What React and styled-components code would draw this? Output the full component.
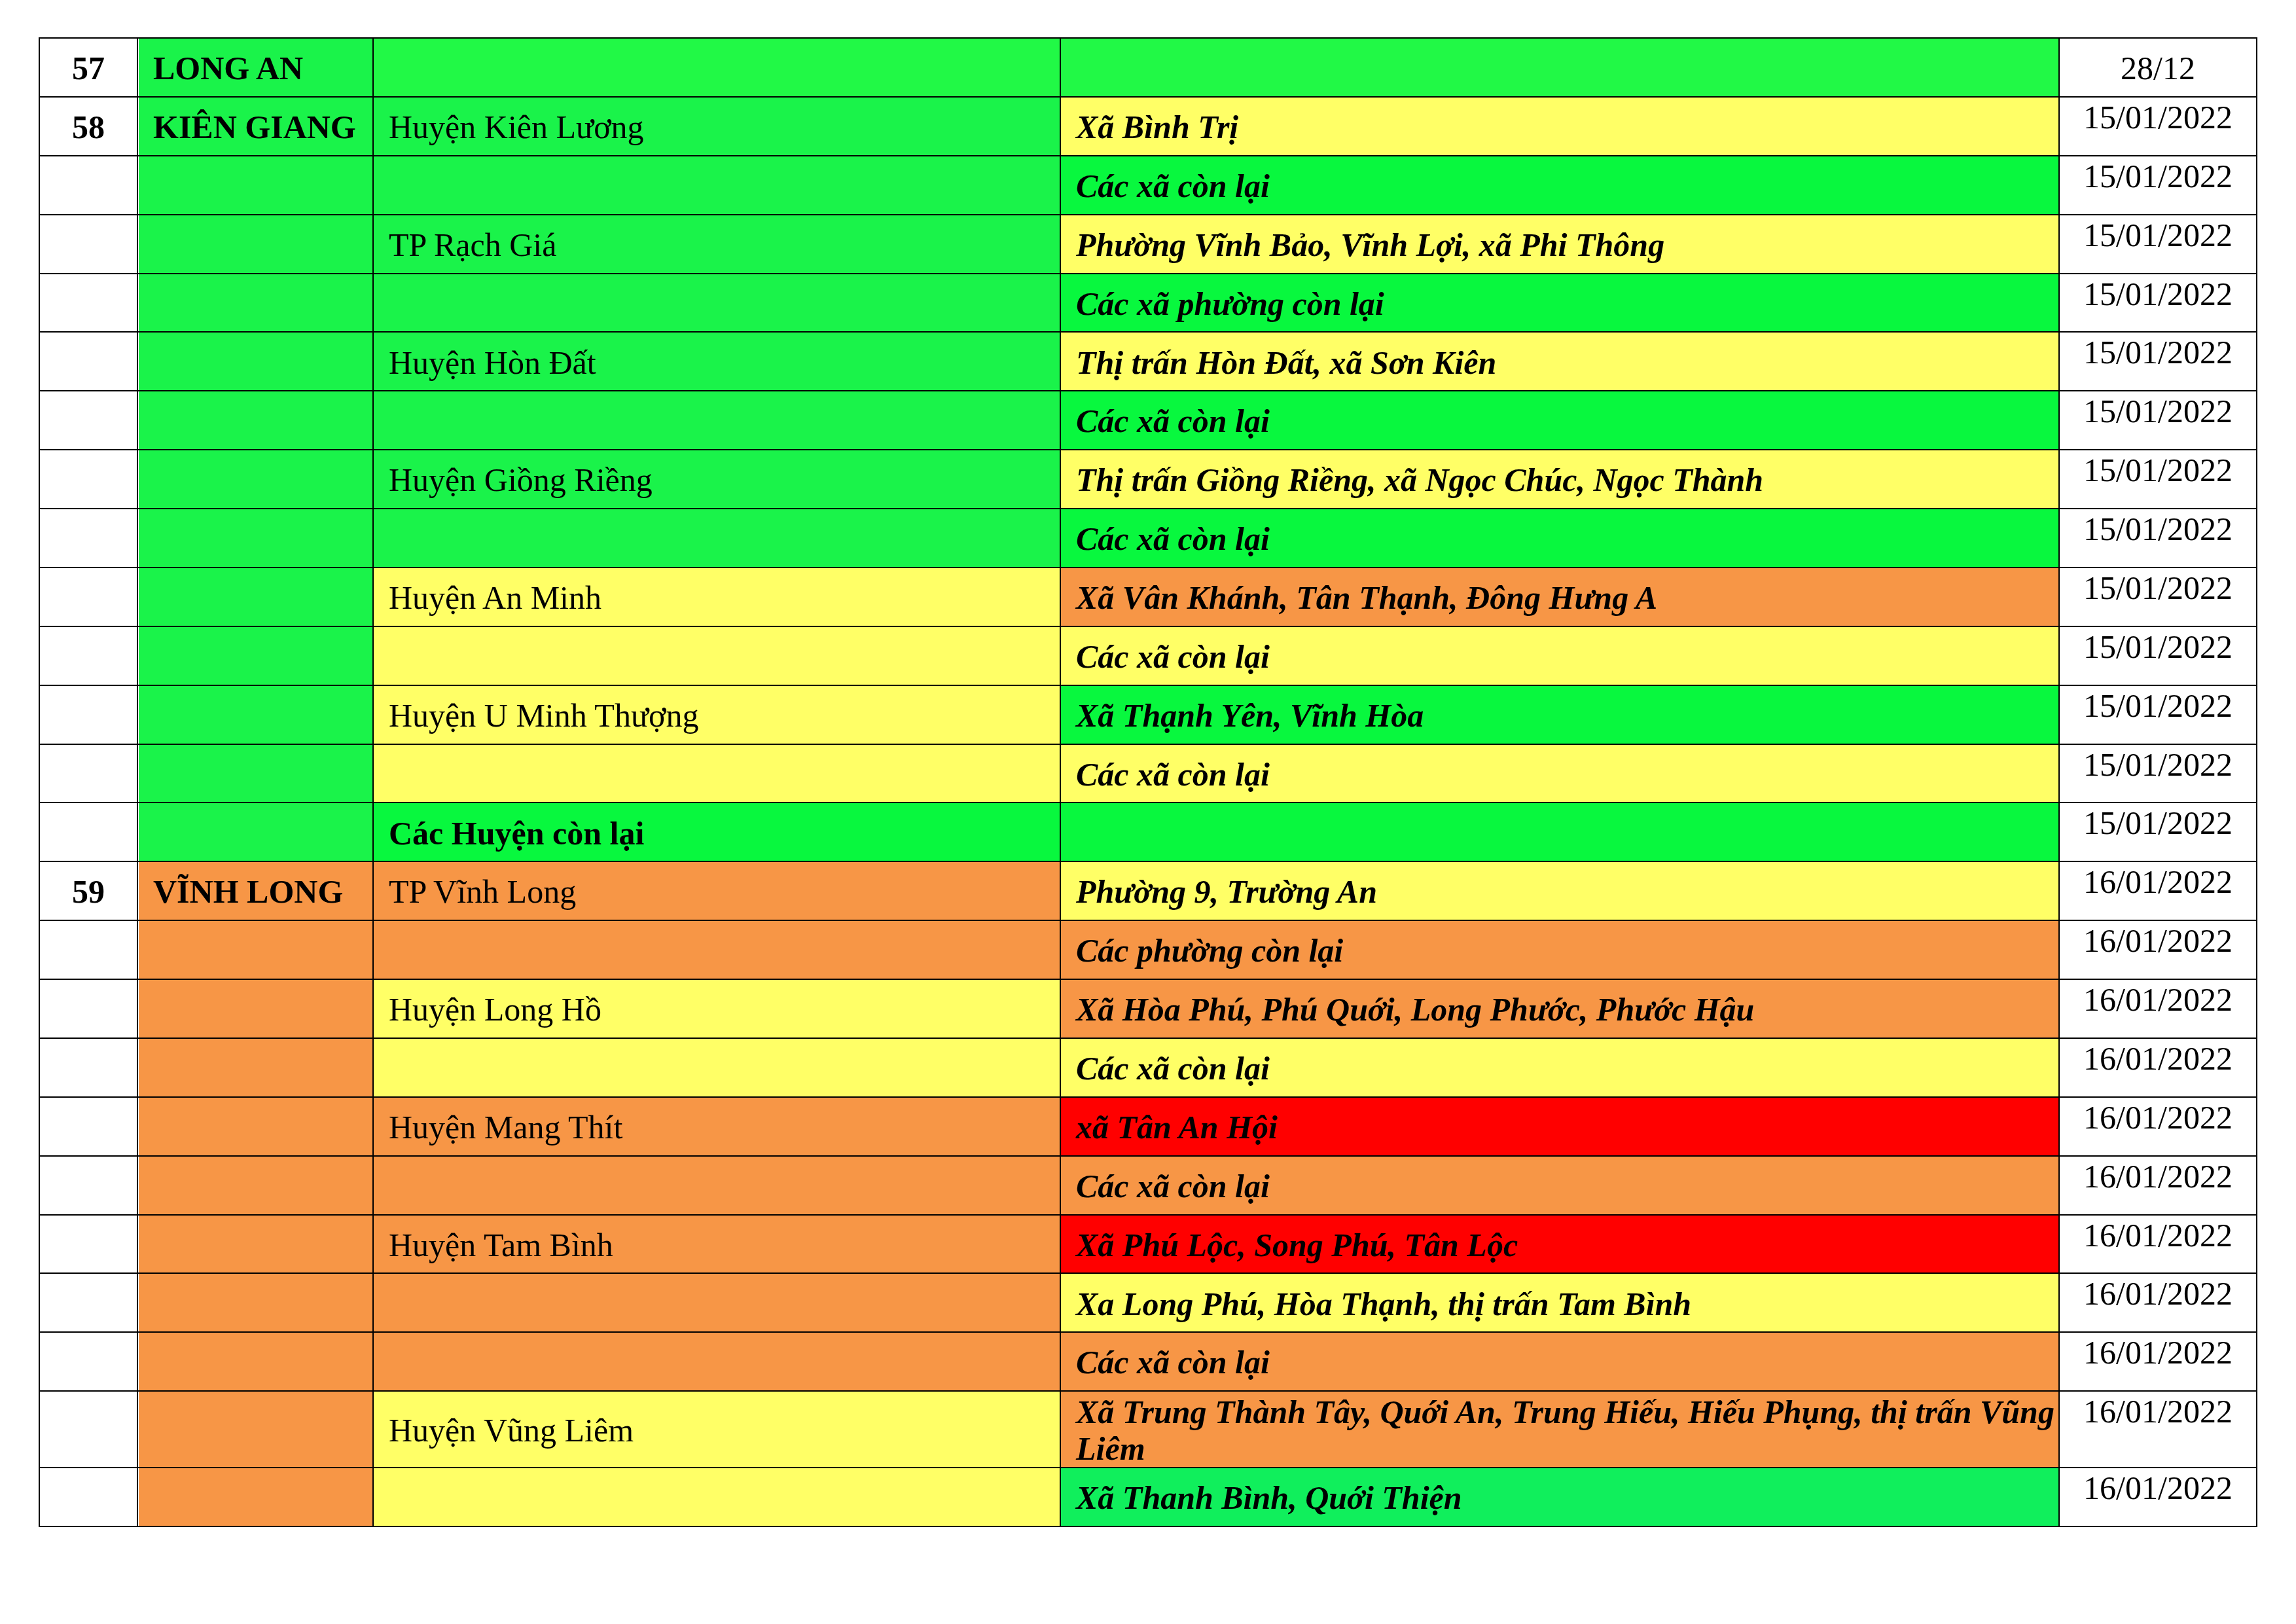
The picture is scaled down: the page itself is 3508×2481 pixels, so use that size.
import React from "react";
import styled, { createGlobalStyle } from "styled-components";

const GlobalStyle = createGlobalStyle`
  html, body {
    margin: 0;
    padding: 0;
    background: #ffffff;
  }
  body {
    font-family: "Liberation Serif", "Times New Roman", serif;
    color: #000;
  }
`;

const C = {
  white: "#ffffff",
  greenProv: "#1AF34A",
  greenTop: "#21F946",
  green: "#08F83E",
  greenLast: "#10EF5C",
  yellow: "#FFFF66",
  orange: "#F79646",
  red: "#FF0000",
};

const Page = styled.div`
  width: 3508px;
  height: 2481px;
  box-sizing: border-box;
  padding: 57px 0 0 59px;
  background: #fff;
  overflow: hidden;
`;

const Table = styled.div`
  display: flex;
  flex-direction: column;
  width: 3390px;
  border-top: 2px solid #000;
  border-left: 2px solid #000;
  box-sizing: border-box;
`;

const Row = styled.div`
  display: grid;
  grid-template-columns: 150px 360px 1050px 1526px 302px;
  min-height: 89.88px;
`;

const Cell = styled.div`
  box-sizing: border-box;
  border-right: 2px solid #000;
  border-bottom: 2px solid #000;
  background: ${(p) => p.$bg || "#fff"};
  display: flex;
  align-items: ${(p) => (p.$top ? "flex-start" : "center")};
  justify-content: ${(p) => (p.$center ? "center" : "flex-start")};
  padding: 4px ${(p) => (p.$tight ? "6px" : "23px")} 0 23px;
  font-size: 50px;
  line-height: 1.11;
  font-weight: ${(p) => (p.$bold ? 700 : 400)};
  font-style: ${(p) => (p.$italic ? "italic" : "normal")};
  ${(p) => (p.$edge ? "box-shadow: inset 1px 0 0 #fff;" : "")}
`;

const NumCell = styled(Cell).attrs({ $center: true, $bold: true })`
  padding: 4px 0 0;
`;

const DateCell = styled(Cell).attrs({ $center: true })`
  padding: ${(p) => (p.$top ? "3px 0 0" : "4px 0 0")};
`;

const rows = [
  { no: "57", prov: "LONG AN", provBg: C.greenProv, dist: "", distBg: C.greenTop, ward: "", wardBg: C.greenTop, date: "28/12", dateMid: true },
  { no: "58", prov: "KIÊN GIANG", provBg: C.greenProv, dist: "Huyện Kiên Lương", distBg: C.greenProv, ward: "Xã Bình Trị", wardBg: C.yellow, date: "15/01/2022" },
  { provBg: C.greenProv, distBg: C.greenProv, ward: "Các xã còn lại", wardBg: C.green, date: "15/01/2022" },
  { provBg: C.greenProv, dist: "TP Rạch Giá", distBg: C.greenProv, ward: "Phường Vĩnh Bảo, Vĩnh Lợi, xã Phi Thông", wardBg: C.yellow, date: "15/01/2022" },
  { provBg: C.greenProv, distBg: C.greenProv, ward: "Các xã phường còn lại", wardBg: C.green, date: "15/01/2022" },
  { provBg: C.greenProv, dist: "Huyện Hòn Đất", distBg: C.greenProv, ward: "Thị trấn Hòn Đất, xã Sơn Kiên", wardBg: C.yellow, date: "15/01/2022" },
  { provBg: C.greenProv, distBg: C.greenProv, ward: "Các xã còn lại", wardBg: C.green, date: "15/01/2022" },
  { provBg: C.greenProv, dist: "Huyện Giồng Riềng", distBg: C.greenProv, ward: "Thị trấn Giồng Riềng, xã Ngọc Chúc, Ngọc Thành", wardBg: C.yellow, date: "15/01/2022" },
  { provBg: C.greenProv, distBg: C.greenProv, ward: "Các xã còn lại", wardBg: C.green, date: "15/01/2022" },
  { provBg: C.greenProv, dist: "Huyện An Minh", distBg: C.yellow, ward: "Xã Vân Khánh, Tân Thạnh, Đông Hưng A", wardBg: C.orange, date: "15/01/2022" },
  { provBg: C.greenProv, distBg: C.yellow, ward: "Các xã còn lại", wardBg: C.yellow, date: "15/01/2022" },
  { provBg: C.greenProv, dist: "Huyện U Minh Thượng", distBg: C.yellow, ward: "Xã Thạnh Yên, Vĩnh Hòa", wardBg: C.green, date: "15/01/2022" },
  { provBg: C.greenProv, distBg: C.yellow, ward: "Các xã còn lại", wardBg: C.yellow, date: "15/01/2022" },
  { provBg: C.greenProv, dist: "Các Huyện còn lại", distBold: true, distBg: C.green, ward: "", wardBg: C.green, date: "15/01/2022" },
  { no: "59", prov: "VĨNH LONG", provBg: C.orange, dist: "TP Vĩnh Long", distBg: C.orange, ward: "Phường 9, Trường An", wardBg: C.yellow, date: "16/01/2022" },
  { provBg: C.orange, distBg: C.orange, ward: "Các phường còn lại", wardBg: C.orange, date: "16/01/2022" },
  { provBg: C.orange, dist: "Huyện Long Hồ", distBg: C.yellow, ward: "Xã Hòa Phú, Phú Quới, Long Phước, Phước Hậu", wardBg: C.orange, date: "16/01/2022" },
  { provBg: C.orange, distBg: C.yellow, ward: "Các xã còn lại", wardBg: C.yellow, date: "16/01/2022" },
  { provBg: C.orange, dist: "Huyện Mang Thít", distBg: C.orange, ward: "xã Tân An Hội", wardBg: C.red, date: "16/01/2022" },
  { provBg: C.orange, distBg: C.orange, ward: "Các xã còn lại", wardBg: C.orange, date: "16/01/2022" },
  { provBg: C.orange, dist: "Huyện Tam Bình", distBg: C.orange, ward: "Xã Phú Lộc, Song Phú, Tân Lộc", wardBg: C.red, date: "16/01/2022" },
  { provBg: C.orange, distBg: C.orange, ward: "Xa Long Phú, Hòa Thạnh, thị trấn Tam Bình", wardBg: C.yellow, date: "16/01/2022" },
  { provBg: C.orange, distBg: C.orange, ward: "Các xã còn lại", wardBg: C.orange, date: "16/01/2022" },
  { provBg: C.orange, dist: "Huyện Vũng Liêm", distBg: C.yellow, ward: "Xã Trung Thành Tây, Quới An, Trung Hiếu, Hiếu Phụng, thị trấn Vũng Liêm", wardBg: C.orange, date: "16/01/2022" },
  { provBg: C.orange, distBg: C.yellow, ward: "Xã Thanh Bình, Quới Thiện", wardBg: C.greenLast, date: "16/01/2022" },
];

export default function App() {
  return (
    <>
      <GlobalStyle />
      <Page>
        <Table>
          {rows.map((r, i) => (
            <Row key={i}>
              <NumCell $bg={C.white}>{r.no || ""}</NumCell>
              <Cell $bg={r.provBg} $bold $edge>
                {r.prov || ""}
              </Cell>
              <Cell $bg={r.distBg} $bold={!!r.distBold}>
                {r.dist || ""}
              </Cell>
              <Cell $bg={r.wardBg} $bold $italic $tight>
                {r.ward}
              </Cell>
              <DateCell $bg={C.white} $top={!r.dateMid}>
                {r.date}
              </DateCell>
            </Row>
          ))}
        </Table>
      </Page>
    </>
  );
}
